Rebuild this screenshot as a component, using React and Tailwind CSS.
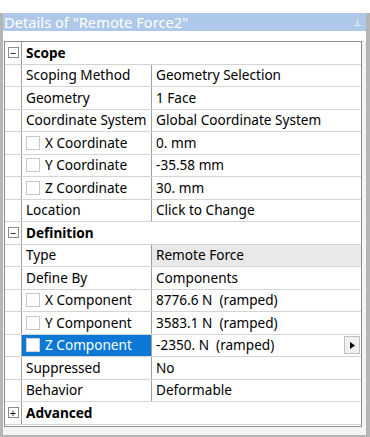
import React from "react";

const rows = [
  { type: "h", label: "Scope", sign: "−" },
  { label: "Scoping Method", value: "Geometry Selection" },
  { label: "Geometry", value: "1 Face" },
  { label: "Coordinate System", value: "Global Coordinate System" },
  { label: "X Coordinate", value: "0. mm", cb: true },
  { label: "Y Coordinate", value: "-35.58 mm", cb: true },
  { label: "Z Coordinate", value: "30. mm", cb: true },
  { label: "Location", value: "Click to Change" },
  { type: "h", label: "Definition", sign: "−" },
  { label: "Type", value: "Remote Force", grey: true },
  { label: "Define By", value: "Components" },
  { label: "X Component", value: "8776.6 N  (ramped)", cb: true },
  { label: "Y Component", value: "3583.1 N  (ramped)", cb: true },
  { label: "Z Component", value: "-2350. N  (ramped)", cb: true, sel: true },
  { label: "Suppressed", value: "No" },
  { label: "Behavior", value: "Deformable" },
  { type: "h", label: "Advanced", sign: "+" },
];

function Box({ sel }) {
  return (
    <span
      className={`inline-block w-[14px] h-[14px] mr-[5px] border ${
        sel ? "bg-white border-[#d0d0d0]" : "bg-white border-[#c8c8c8]"
      }`}
    />
  );
}

function Sign({ s }) {
  return (
    <span className="w-[11px] h-[11px] border border-[#8a8a8a] bg-white flex items-center justify-center text-[11px] leading-none text-black">
      {s}
    </span>
  );
}

export default function App() {
  return (
    <div
      className="w-[370px] h-[437px] bg-white relative overflow-hidden"
      style={{ fontFamily: '"Noto Sans", "Open Sans", sans-serif' }}
    >
      <div className="h-[13px] bg-white" />
      <div className="flex flex-col h-[424px] border-l-[3px] border-r-[4px] border-b-[2px] border-[#b5b5b5] bg-[#f4f4f4]">
        <div className="h-[18px] bg-[#adc8e8] flex items-center justify-between pl-[1px] pr-[4px] text-white text-[14.7px] leading-none">
          <span>Details of "Remote Force2"</span>
          <span className="text-[10px] text-white">⊥</span>
        </div>
        <div className="h-[10px] bg-white" />
        <div className="ml-[1px] w-[358px] border border-[#8c8c8c] bg-white flex flex-col">
          {rows.map((r, i) =>
            r.type === "h" ? (
              <div key={i} className="flex h-[22.5px] border-b border-[#d4d4d4]">
                <div className="w-[17px] flex items-center justify-center border-r border-[#a0a0a0]">
                  <Sign s={r.sign} />
                </div>
                <div className="flex-1 flex items-center pl-[4px] font-bold text-[13.6px] text-black">
                  {r.label}
                </div>
              </div>
            ) : (
              <div key={i} className="flex h-[22.5px] border-b border-[#d4d4d4] text-[13.6px] text-black">
                <div className="w-[17px] border-r border-[#a0a0a0]" />
                <div
                  className={`w-[130px] flex items-center pl-[4px] border-r border-[#a0a0a0] whitespace-nowrap ${
                    r.sel ? "bg-[#0a78d4] text-white" : ""
                  }`}
                >
                  {r.cb && <Box sel={r.sel} />}
                  {r.label}
                </div>
                <div
                  className={`flex-1 flex items-center pl-[4px] ${
                    r.grey ? "bg-[#e9e9e9]" : ""
                  }`}
                >
                  <span className="flex-1 whitespace-pre">{r.value}</span>
                  {r.sel && (
                    <span className="w-[16px] h-[18px] mr-[1px] bg-[#f0f0f0] border border-[#c0c0c0] flex items-center justify-center">
                      <svg width="5" height="7" viewBox="0 0 5 7">
                        <path d="M0 0 L5 3.5 L0 7 Z" fill="#000" />
                      </svg>
                    </span>
                  )}
                </div>
              </div>
            )
          )}
          <div className="h-[1px]" />
        </div>
      </div>
    </div>
  );
}
